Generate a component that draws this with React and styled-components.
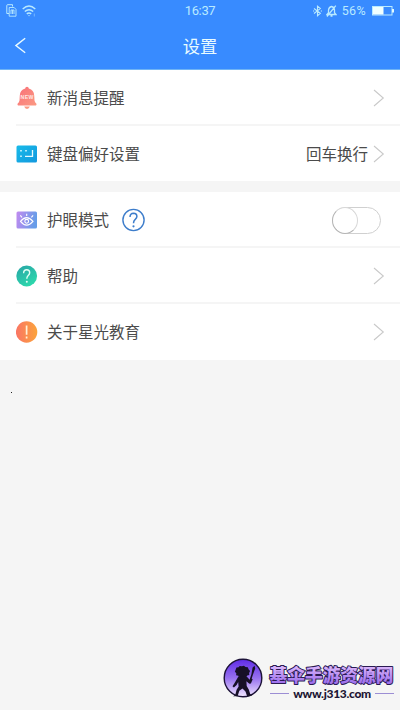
import React, { useState } from "react";
import styled, { createGlobalStyle } from "styled-components";

const GlobalStyle = createGlobalStyle`
  * {
    box-sizing: border-box;
  }

  body {
    margin: 0;
    background-color: #f5f5f5;
    font-family: "Liberation Sans", "Noto Sans CJK SC", sans-serif;
  }
`;

const Page = styled.div`
  position: relative;
  display: flex;
  flex-direction: column;
  width: 400px;
  height: 710px;
  overflow: hidden;
  background-color: #f5f5f5;
`;

const Header = styled.header`
  height: 70px;
  background-color: #388bff;
  color: #e9fbff;
  border-bottom: 1px solid #70b4f5;
`;

const StatusBar = styled.div`
  display: grid;
  grid-template-columns: 1fr auto 1fr;
  align-items: center;
  height: 21px;
  padding: 0 6px 0 6px;
  color: #b9eaff;
  font-family: Roboto, sans-serif;
  font-size: 12.5px;
`;

const StatusGroup = styled.div`
  display: flex;
  align-items: center;
  justify-content: ${(props) => props.$justify || "flex-start"};
  gap: ${(props) => props.$gap || 0}px;

  svg {
    display: block;
    flex: none;
  }
`;

const Time = styled.span`
  font-size: 13px;
  letter-spacing: -0.35px;
`;

const Percent = styled.span`
  margin: 0 2px 0 1px;
  letter-spacing: 0.35px;
`;

const TitleBar = styled.div`
  display: grid;
  grid-template-columns: 50px 1fr 50px;
  align-items: center;
  height: 49px;
`;

const BackButton = styled.button`
  display: flex;
  padding: 0 0 0 14px;
  border: none;
  background: none;
  color: inherit;
`;

const Title = styled.h1`
  margin: 0;
  padding-top: 3px;
  font-size: 17.3px;
  line-height: 24px;
  font-weight: 400;
  text-align: center;
`;

const Group = styled.section`
  margin-bottom: 11px;
  background-color: #fff;
`;

const Row = styled.div`
  display: flex;
  align-items: center;
  height: ${(props) => props.$height || 56}px;
  padding: 0 15px 0 16px;
`;

const Divider = styled.div`
  height: 2px;
  margin: -2px 0 0 16px;
  background-color: #f5f5f5;
`;

const IconBox = styled.div`
  display: flex;
  width: 22px;
  margin-right: 9px;
`;

const Label = styled.span`
  padding-top: 2px;
  color: #4b4b4b;
  font-size: 15.5px;
  line-height: 22px;
`;

const Value = styled(Label)`
  margin-right: 5px;
`;

const Spacer = styled.div`
  flex: 1;
`;

const HelpButton = styled.button`
  display: flex;
  margin-left: 13px;
  padding: 0;
  border: none;
  background: none;
`;

const Switch = styled.button`
  display: flex;
  justify-content: ${(props) => (props.$on ? "flex-end" : "flex-start")};
  width: 49px;
  height: 27px;
  margin-right: 4px;
  padding: 0;
  border: 1px solid #d0d0d0;
  border-radius: 14px;
  background-color: ${(props) => (props.$on ? "#388bff" : "#fff")};
`;

const Knob = styled.span`
  width: 26px;
  height: 27px;
  margin: -1px;
  border: 1px solid #d8d8d8;
  border-left-color: #b5b5b5;
  border-bottom-color: #b5b5b5;
  border-radius: 50%;
  background-color: #fff;
`;

const Speck = styled.span`
  position: absolute;
  top: 392px;
  left: 11px;
  width: 1px;
  height: 1px;
  background-color: #222;
`;

const Watermark = styled.div`
  position: absolute;
  right: 6px;
  bottom: 9px;
  display: flex;
  align-items: flex-end;
  gap: 6px;

  > svg {
    margin-bottom: 3px;
  }
`;

const WatermarkText = styled.div`
  display: flex;
  flex-direction: column;
  width: 125px;
`;

const SiteName = styled.svg`
  display: block;
  width: 125px;
  height: 22px;
  overflow: visible;

  text {
    font-family: "Noto Sans CJK SC", sans-serif;
    font-size: 17.7px;
    font-weight: 900;
    stroke: #2a1a52;
    stroke-width: 1.9px;
    stroke-linejoin: round;
    paint-order: stroke;
  }
`;

const SiteUrl = styled.div`
  display: flex;
  align-items: center;
  gap: 4px;
  height: 15px;
  padding-left: 1px;
  color: #1c1533;
  font-family: Lato, sans-serif;
  font-size: 12px;
  font-weight: 900;
  letter-spacing: -0.3px;
  line-height: 15px;
  white-space: nowrap;

  &::before,
  &::after {
    content: "";
    flex: 1;
    height: 1px;
    background-color: #9c8ed4;
  }
`;

const SimIcon = () => (
  <svg width="11" height="13" viewBox="0 0 11 13" fill="none" stroke="currentColor">
    <path d="M3 9.5H.8V1.5Q.8.7 1.6.7H6.5V2.5" />
    <path d="M3.2 3.5h5l1.8 2v6.7H3.2zM5 10V6h3v4M6.5 6v4" strokeWidth=".9" />
  </svg>
);

const WifiIcon = () => (
  <svg width="14" height="12" viewBox="0 0 14 12" fill="none" stroke="currentColor" strokeWidth="1.4">
    <path d="M.7 4Q7-1.8 13.3 4M2.8 6.6Q7 2.8 11.2 6.6M4.8 8.9Q7 7 9.2 8.9" />
    <circle cx="7" cy="10.6" r=".7" fill="currentColor" stroke="none" />
    <path d="M12.3 8.5v3" strokeWidth=".8" opacity=".6" />
  </svg>
);

const BluetoothIcon = () => (
  <svg width="9" height="12" viewBox="0 0 9 12" fill="none" stroke="currentColor" strokeWidth="1.1">
    <path d="M1 3.5 7.3 8.3 4.5 10.7V1.2L7.3 3.6 1 8.5M0 6h1.2M7.8 6H9" />
  </svg>
);

const MutedBellIcon = () => (
  <svg width="11" height="12" viewBox="0 0 11 12" fill="none" stroke="currentColor" strokeWidth="1.3">
    <path d="M1 9.5 2.5 7.8V5Q3 2 5.5 1.5 8.3 2 8.5 5v2.8L10 9.5zM4.5 11h2M1 11.5 9.8.7" />
  </svg>
);

const BatteryIcon = () => (
  <svg width="22" height="10" viewBox="0 0 22 10">
    <rect x=".5" y=".5" width="19.5" height="8.5" fill="none" stroke="currentColor" />
    <path d="M1 1h10.5v7.5H1z" fill="#f0ffff" />
    <path d="M20 3h2v3.5h-2z" fill="#e1faff" />
  </svg>
);

const BackIcon = () => (
  <svg width="12" height="17" viewBox="0 0 12 17" fill="none" stroke="currentColor" strokeWidth="1.4">
    <path d="M11.2 1.2 1.9 8.6l9.3 7.2" />
  </svg>
);

const Chevron = () => (
  <svg width="12" height="18" viewBox="0 0 12 18" fill="none" stroke="#c9c9c9" strokeWidth="1.1">
    <path d="m1 1 9.3 8L1 17" />
  </svg>
);

const BellIcon = () => (
  <svg width="22" height="24" viewBox="0 0 22 24">
    <defs>
      <linearGradient id="bell" x1="0" y1="0" x2="1" y2="1">
        <stop stopColor="#f96f78" />
        <stop offset="1" stopColor="#fb9a83" />
      </linearGradient>
    </defs>
    <path
      d="M11 .7q1.7 0 1.8 1.7Q18 3.7 18.2 9.5l.3 5q.3 2 1.8 3 .8 2-1.3 2H3q-2.1 0-1.3-2 1.5-1 1.8-3l.3-5Q4 3.7 9.2 2.4 9.3.7 11 .7z"
      fill="url(#bell)"
    />
    <path d="M8.2 20.6h5.6q-.7 2.4-2.8 2.4t-2.8-2.4z" fill="#fb9a83" />
    <text
      x="11"
      y="13"
      fill="#ffe8e6"
      fontFamily="Liberation Sans, sans-serif"
      fontSize="5.2"
      fontWeight="700"
      textAnchor="middle"
      textLength="13"
    >
      NEW
    </text>
  </svg>
);

const KeyboardIcon = () => (
  <svg width="22" height="18" viewBox="0 0 22 18">
    <defs>
      <linearGradient id="keyboard" x1="0" y1="0" x2="1" y2="1">
        <stop stopColor="#18bbe9" />
        <stop offset="1" stopColor="#1398de" />
      </linearGradient>
    </defs>
    <rect x=".5" y=".5" width="20.5" height="17" rx="1.5" fill="url(#keyboard)" />
    <path d="M4.2 5h1.6v1.6H4.2zM9.2 5h1.6v1.6H9.2zM4.2 10.4h1.6V12H4.2z" fill="#d6f7ff" />
    <path d="M9 11.4h7.5V5" fill="none" stroke="#e7fbff" strokeWidth="1.3" />
  </svg>
);

const EyeIcon = () => (
  <svg width="22" height="18" viewBox="0 0 22 18">
    <defs>
      <linearGradient id="eye" x1="0" y1="0" x2="1" y2=".2">
        <stop stopColor="#c28af0" />
        <stop offset="1" stopColor="#669de8" />
      </linearGradient>
    </defs>
    <rect x=".5" y=".5" width="20.5" height="17" rx="1.5" fill="url(#eye)" />
    <g fill="none" stroke="#fff" strokeWidth="1.1">
      <path d="M4.5 10.4q6-7.5 12.5 0-6.5 7.4-12.5 0z" />
      <circle cx="10.7" cy="10.3" r="1.9" />
      <path d="m4.3 4.3 1.7 2M10.7 2.8v2.3M17.1 4.3l-1.7 2" />
    </g>
  </svg>
);

const HelpIcon = () => (
  <svg width="22" height="22" viewBox="0 0 22 22">
    <defs>
      <linearGradient id="help" x1="0" y1="0" x2=".6" y2="1">
        <stop stopColor="#28a4a6" />
        <stop offset="1" stopColor="#2dd8ac" />
      </linearGradient>
    </defs>
    <circle cx="10.7" cy="11" r="10.4" fill="url(#help)" />
    <path
      d="M7.6 8.2q.1-3.5 3.1-3.5t3 3q0 1.4-1.5 2.8-1.4 1.3-1.4 3.3"
      fill="none"
      stroke="#e2fff5"
      strokeWidth="1.4"
    />
    <circle cx="10.8" cy="16.7" r="1" fill="#e2fff5" />
  </svg>
);

const AboutIcon = () => (
  <svg width="22" height="22" viewBox="0 0 22 22">
    <defs>
      <linearGradient id="about" x1="0" y1=".5" x2="1" y2=".5">
        <stop stopColor="#fa7565" />
        <stop offset="1" stopColor="#fba43b" />
      </linearGradient>
    </defs>
    <circle cx="10.6" cy="11" r="10.7" fill="url(#about)" />
    <path d="M10.6 4.5v9.2M10.6 15.5v2" stroke="#fff1d8" strokeWidth="1.7" />
  </svg>
);

const QuestionIcon = () => (
  <svg width="23" height="24" viewBox="0 0 23 24" fill="none" stroke="#3d7dcb">
    <circle cx="11.5" cy="12" r="10.6" strokeWidth="1.4" />
    <path d="M8 9.1q.1-3.8 3.5-3.8 3.4.1 3.4 3.2 0 1.4-1.7 2.9-1.7 1.4-1.7 3.8" strokeWidth="1.5" />
    <circle cx="11.5" cy="18.3" r="1.1" fill="#3d7dcb" stroke="none" />
  </svg>
);

const WarriorLogo = () => (
  <svg width="40" height="40" viewBox="0 0 40 40">
    <defs>
      <linearGradient id="logo" x1="0" y1="0" x2="0" y2="1">
        <stop stopColor="#5f2be8" />
        <stop offset=".5" stopColor="#9670ee" />
        <stop offset="1" stopColor="#f0e6ff" />
      </linearGradient>
    </defs>
    <circle cx="20" cy="20" r="18.8" fill="url(#logo)" stroke="#1c1238" strokeWidth="1.4" />
    <g fill="#171027">
      <path d="m12.5 12 1-2.5 2-.3 1.2-1.3 2.2.4 2-.6 1.7 1.3 2.2.2.9 2.3 1.4 1.6-1 1.8.2 2-2 .6-1.4 1.7h-6l-1.6-1.4-2.2-.5.2-2-1.4-1.6z" />
      <path d="m15.5 18.3 8.2.2 3.2 3.5 1-1.8 1.8 1-1.8 4.4-1.5.2-3-2.5.3 4.8 2.2 3.6 1.3 4.3 2 1.5-5 1.1-1.7-5-3-3-3.2 2.2-1.7 5.5H10l2.3-1.6 1.3-5 2-3.2-.4-4.5-1.6 3-2.7 2.6-1.4-1.3 1.8-2.7z" />
      <path d="m25.9 23.8 2.5-7.5 1.2-6.7 2-1.8.6 2.6-2.3 6.4-2.5 7.7z" />
    </g>
  </svg>
);

const App = () => {
  const [eyeCare, setEyeCare] = useState(false);

  return (
    <Page>
      <GlobalStyle />
      <Header>
        <StatusBar>
          <StatusGroup $gap={5}>
            <SimIcon />
            <WifiIcon />
          </StatusGroup>
          <Time>16:37</Time>
          <StatusGroup $justify="flex-end" $gap={4}>
            <BluetoothIcon />
            <MutedBellIcon />
            <Percent>56%</Percent>
            <BatteryIcon />
          </StatusGroup>
        </StatusBar>
        <TitleBar>
          <BackButton type="button" aria-label="返回">
            <BackIcon />
          </BackButton>
          <Title>设置</Title>
        </TitleBar>
      </Header>

      <Group>
        <Row>
          <IconBox>
            <BellIcon />
          </IconBox>
          <Label>新消息提醒</Label>
          <Spacer />
          <Chevron />
        </Row>
        <Divider />
        <Row $height={55}>
          <IconBox>
            <KeyboardIcon />
          </IconBox>
          <Label>键盘偏好设置</Label>
          <Spacer />
          <Value>回车换行</Value>
          <Chevron />
        </Row>
      </Group>

      <Group>
        <Row>
          <IconBox>
            <EyeIcon />
          </IconBox>
          <Label>护眼模式</Label>
          <HelpButton type="button" aria-label="说明">
            <QuestionIcon />
          </HelpButton>
          <Spacer />
          <Switch
            type="button"
            role="switch"
            aria-checked={eyeCare}
            $on={eyeCare}
            onClick={() => setEyeCare(!eyeCare)}
          >
            <Knob />
          </Switch>
        </Row>
        <Divider />
        <Row>
          <IconBox>
            <HelpIcon />
          </IconBox>
          <Label>帮助</Label>
          <Spacer />
          <Chevron />
        </Row>
        <Divider />
        <Row>
          <IconBox>
            <AboutIcon />
          </IconBox>
          <Label>关于星光教育</Label>
          <Spacer />
          <Chevron />
        </Row>
      </Group>

      <Speck />
      <Watermark>
        <WarriorLogo />
        <WatermarkText>
          <SiteName viewBox="0 0 125 22">
            <defs>
              <linearGradient id="site" x1="0" y1="0" x2="0" y2="1">
                <stop offset=".2" stopColor="#dcb8fb" />
                <stop offset=".9" stopColor="#9a6cec" />
              </linearGradient>
            </defs>
            <text x=".6" y="17.6" fill="url(#site)">
              基伞手游资源网
            </text>
          </SiteName>
          <SiteUrl>www.j313.com</SiteUrl>
        </WatermarkText>
      </Watermark>
    </Page>
  );
};

export default App;
